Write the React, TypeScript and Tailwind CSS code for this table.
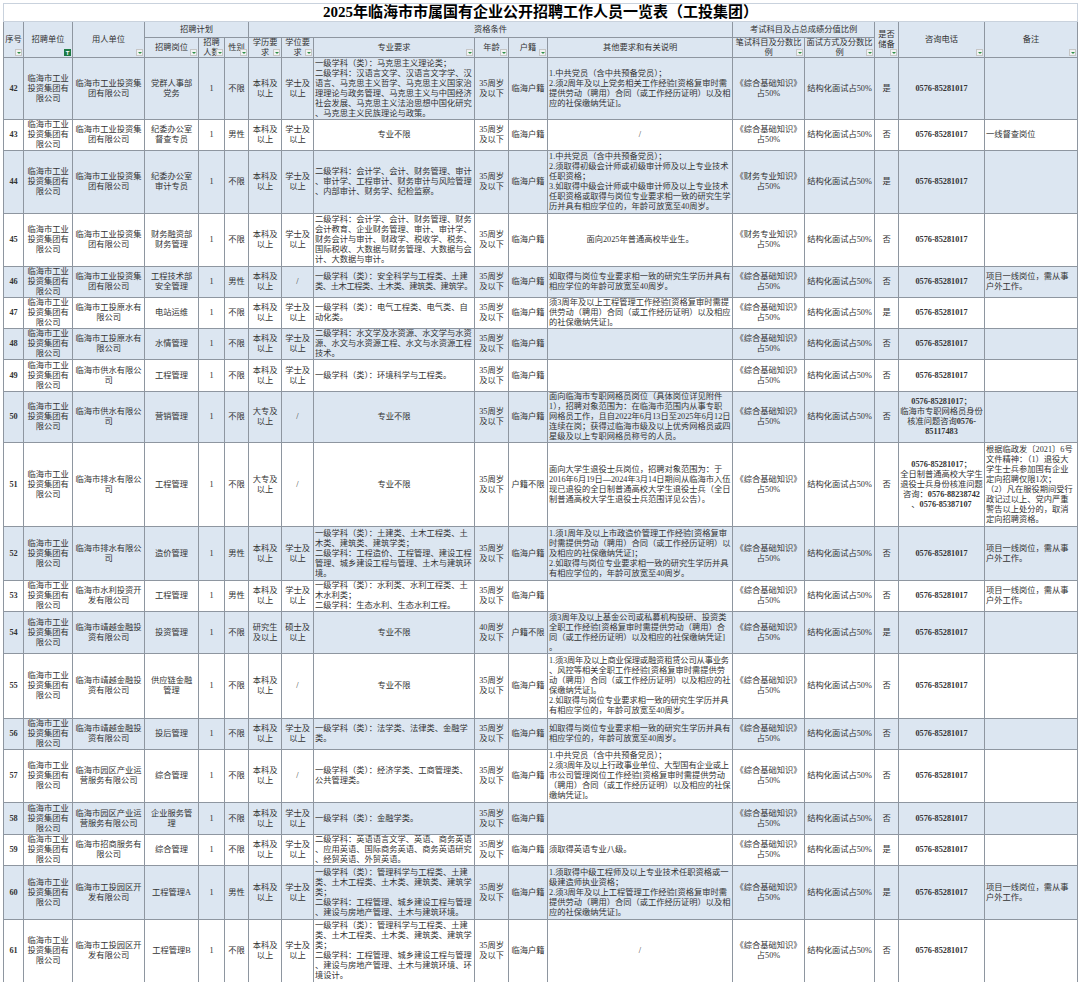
import React from "react";

type Row = {
  n: number;
  emp: string;
  post: string;
  sex: string;
  edu: string;
  deg: string;
  major: string[];
  age: string;
  hk: string;
  other: string[];
  otherCenter?: boolean;
  exam: string;
  res: string;
  phone: string[];
  note: string[];
  h: string;
};

const U = "临海市工业投资集团有限公司";
const P = ["0576-85281017"];
const ZH = "《综合基础知识》";
const CW = "《财务专业知识》";
const FS = 8.25;

const rows: Row[] = [
  {
    n: 42, emp: U, post: "党群人事部党务", sex: "不限", edu: "本科及以上", deg: "学士及以上",
    major: [
      "一级学科（类）：马克思主义理论类；",
      "二级学科：汉语言文学、汉语言文字学、汉",
      "语言、马克思主义哲学、马克思主义国家治",
      "理理论与政务管理、马克思主义与中国经济",
      "社会发展、马克思主义法治思想中国化研究",
      "、马克思主义民族理论与政策。",
    ],
    age: "35", hk: "临海户籍",
    other: [
      "1.中共党员（含中共预备党员）；",
      "2.须2周年及以上党务相关工作经验[资格复审时需",
      "提供劳动（聘用）合同（或工作经历证明）以及相",
      "应的社保缴纳凭证]。",
    ],
    exam: ZH, res: "是", phone: P, note: [], h: "h-[62px]",
  },
  {
    n: 43, emp: U, post: "纪委办公室督查专员", sex: "男性", edu: "本科及以上", deg: "学士及以上",
    major: ["专业不限"], age: "35", hk: "临海户籍", other: ["/"], otherCenter: true,
    exam: ZH, res: "否", phone: P, note: ["一线督查岗位"], h: "h-[31px]",
  },
  {
    n: 44, emp: U, post: "纪委办公室审计专员", sex: "不限", edu: "本科及以上", deg: "学士及以上",
    major: [
      "二级学科：会计学、会计、财务管理、审计",
      "、审计学、工程审计、财务审计与风险管理",
      "、内部审计、财务学、纪检监察。",
    ],
    age: "35", hk: "临海户籍",
    other: [
      "1.中共党员（含中共预备党员）；",
      "2.须取得初级会计师或初级审计师及以上专业技术",
      "任职资格；",
      "3.如取得中级会计师或中级审计师及以上专业技术",
      "任职资格或取得与岗位专业要求相一致的研究生学",
      "历并具有相应学位的，年龄可放宽至40周岁。",
    ],
    exam: CW, res: "是", phone: P, note: [], h: "h-[63px]",
  },
  {
    n: 45, emp: U, post: "财务融资部财务管理", sex: "不限", edu: "本科及以上", deg: "学士及以上",
    major: [
      "二级学科：会计学、会计、财务管理、财务",
      "会计教育、企业财务管理、审计、审计学、",
      "财务会计与审计、财政学、税收学、税务、",
      "国际税收、大数据与财务管理、大数据与会",
      "计、大数据与审计。",
    ],
    age: "35", hk: "临海户籍", other: ["面向2025年普通高校毕业生。"], otherCenter: true,
    exam: CW, res: "否", phone: P, note: [], h: "h-[53px]",
  },
  {
    n: 46, emp: U, post: "工程技术部安全管理", sex: "男性", edu: "本科及以上", deg: "/",
    major: [
      "一级学科（类）：安全科学与工程类、土建",
      "类、土木工程类、土木类、建筑类、建筑学。",
    ],
    age: "35", hk: "临海户籍",
    other: ["如取得与岗位专业要求相一致的研究生学历并具有", "相应学位的年龄可放宽至40周岁。"],
    exam: ZH, res: "否", phone: P, note: ["项目一线岗位，需从事", "户外工作。"], h: "h-[31px]",
  },
  {
    n: 47, emp: "临海市工投原水有限公司", post: "电站运维", sex: "不限", edu: "本科及以上", deg: "学士及以上",
    major: ["一级学科（类）：电气工程类、电气类、自", "动化类。"],
    age: "35", hk: "临海户籍",
    other: [
      "须3周年及以上工程管理工作经验[资格复审时需提",
      "供劳动（聘用）合同（或工作经历证明）以及相应",
      "的社保缴纳凭证]。",
    ],
    exam: ZH, res: "是", phone: P, note: [], h: "h-[31px]",
  },
  {
    n: 48, emp: "临海市工投原水有限公司", post: "水情管理", sex: "不限", edu: "本科及以上", deg: "学士及以上",
    major: [
      "二级学科：水文学及水资源、水文学与水资",
      "源、水文与水资源工程、水文与水资源工程",
      "技术。",
    ],
    age: "35", hk: "临海户籍", other: [],
    exam: ZH, res: "否", phone: P, note: [], h: "h-[31px]",
  },
  {
    n: 49, emp: "临海市供水有限公司", post: "工程管理", sex: "不限", edu: "本科及以上", deg: "学士及以上",
    major: ["一级学科（类）：环境科学与工程类。"],
    age: "35", hk: "临海户籍", other: [],
    exam: ZH, res: "否", phone: P, note: [], h: "h-[32px]",
  },
  {
    n: 50, emp: "临海市供水有限公司", post: "营销管理", sex: "不限", edu: "大专及以上", deg: "/",
    major: ["专业不限"], age: "35", hk: "临海户籍",
    other: [
      "面向临海市专职网格员岗位（具体岗位详见附件",
      "1），招聘对象范围为：在临海市范围内从事专职",
      "网格员工作，且自2022年6月13日至2025年6月12日",
      "连续在岗；获得过临海市级及以上优秀网格员或四",
      "星级及以上专职网格员称号的人员。",
    ],
    exam: ZH, res: "否",
    phone: ["0576-85281017；", "临海市专职网格员身份", "核准问题咨询0576-", "85117483"],
    note: [], h: "h-[51px]",
  },
  {
    n: 51, emp: "临海市排水有限公司", post: "工程管理", sex: "不限", edu: "大专及以上", deg: "/",
    major: ["专业不限"], age: "35", hk: "户籍不限",
    other: [
      "面向大学生退役士兵岗位，招聘对象范围为：于",
      "2016年6月19日—2024年3月14日期间从临海市入伍",
      "现已退役的全日制普通高校大学生退役士兵（全日",
      "制普通高校大学生退役士兵范围详见公告）。",
    ],
    exam: ZH, res: "否",
    phone: ["0576-85281017；", "全日制普通高校大学生", "退役士兵身份核准问题", "咨询：0576-88238742", "、0576-85387107"],
    note: [
      "根据临政发〔2021〕6号",
      "文件精神：（1）退役大",
      "学生士兵参加国有企业",
      "定向招聘仅限1次；",
      "（2）凡在服役期间受行",
      "政记过以上、党内严重",
      "警告以上处分的，取消",
      "定向招聘资格。",
    ],
    h: "h-[84px]",
  },
  {
    n: 52, emp: "临海市排水有限公司", post: "造价管理", sex: "男性", edu: "本科及以上", deg: "学士及以上",
    major: [
      "一级学科（类）：土建类、土木工程类、土",
      "木类、建筑类、建筑学类；",
      "二级学科：工程造价、工程管理、建设工程",
      "管理、城乡建设工程与管理、土木与建筑环",
      "境。",
    ],
    age: "35", hk: "临海户籍",
    other: [
      "1.须1周年及以上市政造价管理工作经验[资格复审",
      "时需提供劳动（聘用）合同（或工作经历证明）以",
      "及相应的社保缴纳凭证]；",
      "2.如取得与岗位专业要求相一致的研究生学历并具",
      "有相应学位的，年龄可放宽至40周岁。",
    ],
    exam: ZH, res: "否", phone: P, note: ["项目一线岗位，需从事", "户外工作。"], h: "h-[54px]",
  },
  {
    n: 53, emp: "临海市水利投资开发有限公司", post: "工程管理", sex: "男性", edu: "本科及以上", deg: "学士及以上",
    major: ["一级学科（类）：水利类、水利工程类、土", "木水利类；", "二级学科：生态水利、生态水利工程。"],
    age: "35", hk: "临海户籍", other: [],
    exam: ZH, res: "否", phone: P, note: ["项目一线岗位，需从事", "户外工作。"], h: "h-[31px]",
  },
  {
    n: 54, emp: "临海市靖越金融投资有限公司", post: "投资管理", sex: "不限", edu: "研究生及以上", deg: "硕士及以上",
    major: ["专业不限"], age: "40", hk: "户籍不限",
    other: [
      "须3周年及以上基金公司或私募机构投研、投资类",
      "全职工作经验[资格复审时需提供劳动（聘用）合",
      "同（或工作经历证明）以及相应的社保缴纳凭证]",
      "。",
    ],
    exam: ZH, res: "是", phone: P, note: [], h: "h-[42px]",
  },
  {
    n: 55, emp: "临海市靖越金融投资有限公司", post: "供应链金融管理", sex: "不限", edu: "本科及以上", deg: "/",
    major: ["专业不限"], age: "35", hk: "临海户籍",
    other: [
      "1.须3周年及以上商业保理或融资租赁公司从事业务",
      "、风控等相关全职工作经验[资格复审时需提供劳",
      "动（聘用）合同（或工作经历证明）以及相应的社",
      "保缴纳凭证]。",
      "2.如取得与岗位专业要求相一致的研究生学历并具",
      "有相应学位的，年龄可放宽至40周岁。",
    ],
    exam: ZH, res: "否", phone: P, note: [], h: "h-[65px]",
  },
  {
    n: 56, emp: "临海市靖越金融投资有限公司", post: "投后管理", sex: "不限", edu: "本科及以上", deg: "学士及以上",
    major: ["一级学科（类）：法学类、法律类、金融学", "类。"],
    age: "35", hk: "临海户籍",
    other: ["如取得与岗位专业要求相一致的研究生学历并具有", "相应学位的，年龄可放宽至40周岁。"],
    exam: ZH, res: "否", phone: P, note: [], h: "h-[30px]",
  },
  {
    n: 57, emp: "临海市园区产业运营服务有限公司", post: "综合管理", sex: "不限", edu: "本科及以上", deg: "/",
    major: ["一级学科（类）：经济学类、工商管理类、", "公共管理类。"],
    age: "35", hk: "临海户籍",
    other: [
      "1.中共党员（含中共预备党员）；",
      "2.须3周年及以上行政事业单位、大型国有企业或上",
      "市公司管理岗位工作经验[资格复审时需提供劳动",
      "（聘用）合同（或工作经历证明）以及相应的社保",
      "缴纳凭证]。",
    ],
    exam: ZH, res: "否", phone: P, note: [], h: "h-[53px]",
  },
  {
    n: 58, emp: "临海市园区产业运营服务有限公司", post: "企业服务管理", sex: "不限", edu: "本科及以上", deg: "学士及以上",
    major: ["一级学科（类）：金融学类。"],
    age: "35", hk: "临海户籍", other: [],
    exam: ZH, res: "否", phone: P, note: [], h: "h-[32px]",
  },
  {
    n: 59, emp: "临海市招商服务有限公司", post: "综合管理", sex: "不限", edu: "本科及以上", deg: "学士及以上",
    major: [
      "二级学科：英语语言文学、英语、商务英语",
      "、应用英语、国际商务英语、商务英语研究",
      "、经贸英语、外贸英语。",
    ],
    age: "35", hk: "临海户籍", other: ["须取得英语专业八级。"],
    exam: ZH, res: "是", phone: P, note: [], h: "h-[30px]",
  },
  {
    n: 60, emp: "临海市工投园区开发有限公司", post: "工程管理A", sex: "男性", edu: "本科及以上", deg: "学士及以上",
    major: [
      "一级学科（类）：管理科学与工程类、土建",
      "类、土木工程类、土木类、建筑类、建筑学",
      "类；",
      "二级学科：工程管理、城乡建设工程与管理",
      "、建设与房地产管理、土木与建筑环境。",
    ],
    age: "35", hk: "临海户籍",
    other: [
      "1.须取得中级工程师及以上专业技术任职资格或一",
      "级建造师执业资格；",
      "2.须3周年及以上工程管理工作经验[资格复审时需",
      "提供劳动（聘用）合同（或工作经历证明）以及相",
      "应的社保缴纳凭证]。",
    ],
    exam: ZH, res: "是", phone: P, note: ["项目一线岗位，需从事", "户外工作。"], h: "h-[54px]",
  },
  {
    n: 61, emp: "临海市工投园区开发有限公司", post: "工程管理B", sex: "不限", edu: "本科及以上", deg: "学士及以上",
    major: [
      "一级学科（类）：管理科学与工程类、土建",
      "类、土木工程类、土木类、建筑类、建筑学",
      "类；",
      "二级学科：工程管理、城乡建设工程与管理",
      "、建设与房地产管理、土木与建筑环境、环",
      "境设计。",
    ],
    age: "35", hk: "临海户籍", other: ["/"], otherCenter: true,
    exam: ZH, res: "否", phone: P, note: [], h: "h-[63px]",
  },
];

const widths = [20, 49, 72, 54, 26, 24, 33, 32, 161, 34, 39, 185, 72, 70, 24, 86, 93];

// rough width of a line in em: ascii counts as half
function em(s: string) {
  let w = 0;
  for (const ch of s) w += ch.charCodeAt(0) < 0x2000 ? 0.5 : 1;
  return w;
}

function Filter({ on }: { on?: boolean }) {
  if (on) {
    return (
      <span className="absolute bottom-[1px] right-[1px] flex h-[7px] w-[7px] items-center justify-center bg-[#1e7b45] font-['Liberation_Sans',sans-serif] text-[6px] leading-none font-bold text-white">
        T
      </span>
    );
  }
  return (
    <span className="absolute bottom-[1px] right-[1px] flex h-[7px] w-[7px] items-center justify-center border border-[#c6c6c6] bg-[#f2f2f2]">
      <span className="h-0 w-0 border-x-[2px] border-t-[2px] border-x-transparent border-t-[#2f8f46]" />
    </span>
  );
}

const hd = "relative border border-[#8e96a0] bg-[#dce6f1] px-[1px] text-center align-middle leading-[9.5px] text-[#333]";
const td = "overflow-hidden border border-[#8e96a0] px-[1px] py-0 align-middle";

function Lines({ lines, avail }: { lines: string[]; avail: number }) {
  return (
    <>
      {lines.map((l, i) => {
        const w = em(l) * FS;
        const n = [...l].length;
        const ls = w > avail ? (avail - w) / n : 0;
        return (
          <div key={i} className="whitespace-nowrap" style={ls ? { letterSpacing: ls } : undefined}>
            {l}
          </div>
        );
      })}
    </>
  );
}

// digits in bold, Chinese text plain
function PhoneLine({ s }: { s: string }) {
  const parts = s.split(/([0-9][0-9-]*)/);
  return (
    <div className="whitespace-nowrap">
      {parts.map((p, i) =>
        /^[0-9]/.test(p) ? (
          <b key={i} className="font-bold">
            {p}
          </b>
        ) : (
          <span key={i}>{p}</span>
        ),
      )}
    </div>
  );
}

export default function App() {
  return (
    <div className="min-h-screen bg-white p-[3px] font-['Liberation_Serif','Noto_Sans_CJK_SC',serif] text-[8.25px] leading-[10px] text-[#333]">
      <table className="w-[1074px] table-fixed border-collapse">
        <colgroup>
          {widths.map((w, i) => (
            <col key={i} style={{ width: w }} />
          ))}
        </colgroup>
        <thead>
          <tr className="h-[18px]">
            <td
              colSpan={17}
              className="border border-[#c9d2dd] text-center align-middle text-[15px] leading-[17px] font-bold text-black"
            >
              2025年临海市市属国有企业公开招聘工作人员一览表（工投集团）
            </td>
          </tr>
          <tr className="h-[16px]">
            <td rowSpan={2} className={hd}>
              序号
              <Filter />
            </td>
            <td rowSpan={2} className={hd}>
              招聘单位
              <Filter on />
            </td>
            <td rowSpan={2} className={hd}>
              用人单位
              <Filter />
            </td>
            <td colSpan={3} className={hd}>
              招聘计划
            </td>
            <td colSpan={6} className={hd}>
              资格条件
            </td>
            <td colSpan={2} className={hd}>
              考试科目及占总成绩分值比例
            </td>
            <td rowSpan={2} className={hd}>
              是否储备
              <Filter />
            </td>
            <td rowSpan={2} className={hd}>
              咨询电话
              <Filter />
            </td>
            <td rowSpan={2} className={hd}>
              备注
              <Filter />
            </td>
          </tr>
          <tr className="h-[20px]">
            <td className={hd}>
              招聘岗位
              <Filter />
            </td>
            <td className={hd}>
              <div className="h-[19px] overflow-hidden">招聘人数</div>
              <Filter />
            </td>
            <td className={hd}>
              性别
              <Filter />
            </td>
            <td className={hd}>
              学历要求
              <Filter />
            </td>
            <td className={hd}>
              学位要求
              <Filter />
            </td>
            <td className={hd}>
              专业要求
              <Filter />
            </td>
            <td className={hd}>
              年龄
              <Filter />
            </td>
            <td className={hd}>
              户籍
              <Filter />
            </td>
            <td className={hd}>其他要求和有关说明</td>
            <td className={hd}>
              笔试科目及分数比例
              <Filter />
            </td>
            <td className={hd}>
              面试方式及分数比例
              <Filter />
            </td>
          </tr>
        </thead>
        <tbody>
          {rows.map((r, i) => {
            const bg = i % 2 === 0 ? "bg-[#dce6f1]" : "bg-white";
            const majorCenter = r.major.length === 1 && r.major[0] === "专业不限";
            return (
              <tr key={r.n} className={`${r.h} ${bg}`}>
                <td className={`${td} text-center font-bold`}>{r.n}</td>
                <td className={`${td} px-[2px] text-center`}>{U}</td>
                <td className={`${td} px-[2px] text-center`}>{r.emp}</td>
                <td className={`${td} px-[2px] text-center`}>{r.post}</td>
                <td className={`${td} text-center`}>1</td>
                <td className={`${td} text-center`}>{r.sex}</td>
                <td className={`${td} text-center`}>{r.edu}</td>
                <td className={`${td} text-center`}>{r.deg}</td>
                <td className={`${td} ${majorCenter ? "text-center" : "text-left"}`}>
                  <Lines lines={r.major} avail={157} />
                </td>
                <td className={`${td} text-center`}>
                  {r.age}周岁
                  <br />
                  及以下
                </td>
                <td className={`${td} text-center`}>{r.hk}</td>
                <td className={`${td} ${r.otherCenter ? "text-center" : "text-left"}`}>
                  <Lines lines={r.other} avail={182} />
                </td>
                <td className={`${td} text-center`}>
                  {r.exam}
                  <br />
                  占50%
                </td>
                <td className={`${td} whitespace-nowrap text-center`}>结构化面试占50%</td>
                <td className={`${td} text-center`}>{r.res}</td>
                <td className={`${td} text-center`}>
                  {r.phone.map((p, k) => (
                    <PhoneLine key={k} s={p} />
                  ))}
                </td>
                <td className={`${td} text-left`}>
                  <Lines lines={r.note} avail={90} />
                </td>
              </tr>
            );
          })}
        </tbody>
      </table>
    </div>
  );
}
